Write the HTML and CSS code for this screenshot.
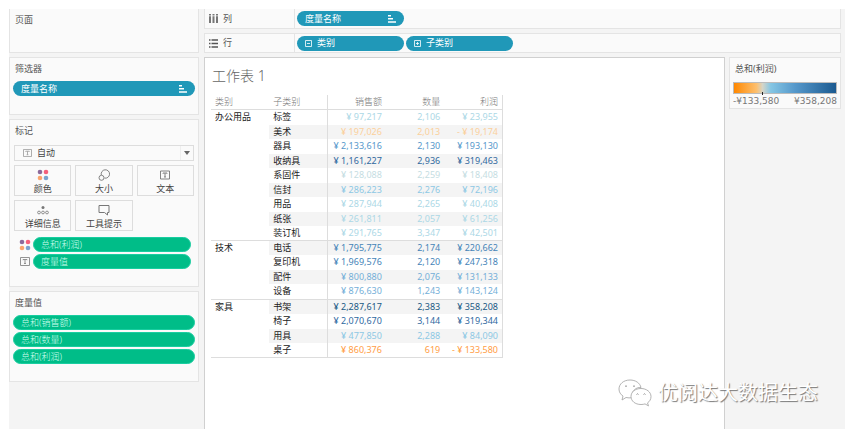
FILE: index.html
```html
<!DOCTYPE html>
<html lang="zh-CN">
<head>
    <meta charset="UTF-8">
    <title>工作表 1</title>
    <link rel="stylesheet" href="styles.css">
</head>
<body>
    <svg class="defs" width="0" height="0">
        <symbol id="sort" viewBox="0 0 8 8">
            <path d="M0 .7h3M0 3.700h5M0 7h8" stroke="currentColor" stroke-width="1.500"/>
        </symbol>
        <symbol id="dots" viewBox="0 0 12 12">
            <circle cx="3" cy="3" r="2.3" fill="#8c6a9b"/>
            <circle cx="9" cy="3" r="2.3" fill="#f5607c"/>
            <circle cx="3" cy="9" r="2.3" fill="#fba56d"/>
            <circle cx="9" cy="9" r="2.3" fill="#7ba3cf"/>
        </symbol>
        <symbol id="text" viewBox="0 0 10 9">
            <path d="M.5.5h9v8h-9z M3 3.200V2.500h4v.7 M5 2.500v4 M4 6.500h2" fill="none" stroke="currentColor" stroke-width=".9"/>
        </symbol>
    </svg>
    <div class="workbook">
        <aside class="sidebar">
            <section class="card pages">
                <h2>页面</h2>
            </section>
            <section class="card filters">
                <h2>筛选器</h2>
                <div class="pill blue"><span>度量名称</span><svg class="sort" width="8" height="8"><use href="#sort"/></svg></div>
            </section>
            <section class="card marks">
                <h2>标记</h2>
                <div class="mark-type">
                    <svg width="9" height="8"><use href="#text"/></svg>
                    <select aria-label="标记类型"><option>自动</option></select>
                    <span class="arrow"></span>
                </div>
                <div class="mark-buttons">
                    <button type="button"><svg width="12" height="12"><use href="#dots"/></svg>颜色</button>
                    <button type="button"><svg width="12" height="12" viewBox="0 0 12 12" fill="none" stroke="#777" stroke-width=".9"><path d="M3.300 6A4.200 4.200 0 1 1 6.500 9.100"/><circle cx="3.500" cy="8.800" r="2.500"/></svg>大小</button>
                    <button type="button"><svg width="10" height="12"><use href="#text"/></svg>文本</button>
                    <button type="button"><svg width="12" height="12" viewBox="0 0 12 12" fill="none" stroke="#777" stroke-width=".8"><circle cx="6" cy="3.500" r="1.500" fill="#777" stroke="none"/><circle cx="2" cy="8.500" r="1.400"/><circle cx="6" cy="8.500" r="1.400"/><circle cx="10" cy="8.500" r="1.400"/></svg>详细信息</button>
                    <button type="button"><svg width="12" height="12" viewBox="0 0 12 12" fill="none" stroke="#777"><path d="M1 1.500h10v7H9.500V11L6.500 8.500H1z"/></svg>工具提示</button>
                </div>
                <div class="mark-row"><svg width="12" height="12"><use href="#dots"/></svg><div class="pill green">总和(利润)</div></div>
                <div class="mark-row"><svg width="12" height="9"><use href="#text"/></svg><div class="pill green">度量值</div></div>
            </section>
            <section class="card values">
                <h2>度量值</h2>
                <div class="pill green">总和(销售额)</div>
                <div class="pill green">总和(数量)</div>
                <div class="pill green">总和(利润)</div>
            </section>
        </aside>
        <main class="main">
            <div class="shelf">
                <div class="shelf-name"><svg width="9" height="9" viewBox="0 0 9 9" stroke="#777" stroke-width="2"><path d="M1 0v1.500m3.500-1.500v1.500m3.500-1.500v1.500M1 2.200V9m3.500-6.800V9m3.500-6.800V9"/></svg>列</div>
                <div class="pill blue"><span>度量名称</span><svg class="sort" width="8" height="8"><use href="#sort"/></svg></div>
            </div>
            <div class="shelf">
                <div class="shelf-name"><svg width="9" height="9" viewBox="0 0 9 9" stroke="#555" stroke-width="1.400"><path d="M0 1h1.500M2.500 1H9M0 4.500h1.500M2.500 4.500H9M0 8h1.500M2.500 8H9"/></svg>行</div>
                <div class="pill blue"><svg width="7" height="7" viewBox="0 0 7 7" fill="none" stroke="#fff" stroke-width=".8"><path d="M.5.5h6v6h-6z M2 3.500h3"/></svg><span>类别</span></div>
                <div class="pill blue"><svg width="7" height="7" viewBox="0 0 7 7" fill="none" stroke="#fff" stroke-width=".8"><path d="M.5.5h6v6h-6z M2 3.500h3 M3.500 2v3"/></svg><span>子类别</span></div>
            </div>
            <div class="content">
                <section class="view">
                    <h1>工作表 1</h1>
                    <table class="crosstab">
                        <thead>
                            <tr><th>类别</th><th>子类别</th><th class="num first">销售额</th><th class="num">数量</th><th class="num">利润</th></tr>
                        </thead>
                        <tbody>
                            <tr class="c3"><th rowspan="9">办公用品</th><th>标签</th><td>¥ 97,217</td><td>2,106</td><td>¥ 23,955</td></tr>
                            <tr class="c1"><th>美术</th><td>¥ 197,026</td><td>2,013</td><td>- ¥ 19,174</td></tr>
                            <tr class="c6"><th>器具</th><td>¥ 2,133,616</td><td>2,130</td><td>¥ 193,130</td></tr>
                            <tr class="c8"><th>收纳具</th><td>¥ 1,161,227</td><td>2,936</td><td>¥ 319,463</td></tr>
                            <tr class="c2"><th>系固件</th><td>¥ 128,088</td><td>2,259</td><td>¥ 18,408</td></tr>
                            <tr class="c4"><th>信封</th><td>¥ 286,223</td><td>2,276</td><td>¥ 72,196</td></tr>
                            <tr class="c3"><th>用品</th><td>¥ 287,944</td><td>2,265</td><td>¥ 40,408</td></tr>
                            <tr class="c3"><th>纸张</th><td>¥ 261,811</td><td>2,057</td><td>¥ 61,256</td></tr>
                            <tr class="c3"><th>装订机</th><td>¥ 291,765</td><td>3,347</td><td>¥ 42,501</td></tr>
                            <tr class="c7 group"><th rowspan="4">技术</th><th>电话</th><td>¥ 1,795,775</td><td>2,174</td><td>¥ 220,662</td></tr>
                            <tr class="c7"><th>复印机</th><td>¥ 1,969,576</td><td>2,120</td><td>¥ 247,318</td></tr>
                            <tr class="c5"><th>配件</th><td>¥ 800,880</td><td>2,076</td><td>¥ 131,133</td></tr>
                            <tr class="c5"><th>设备</th><td>¥ 876,630</td><td>1,243</td><td>¥ 143,124</td></tr>
                            <tr class="c9 group"><th rowspan="4">家具</th><th>书架</th><td>¥ 2,287,617</td><td>2,383</td><td>¥ 358,208</td></tr>
                            <tr class="c8"><th>椅子</th><td>¥ 2,070,670</td><td>3,144</td><td>¥ 319,344</td></tr>
                            <tr class="c4"><th>用具</th><td>¥ 477,850</td><td>2,288</td><td>¥ 84,090</td></tr>
                            <tr class="c0"><th>桌子</th><td>¥ 860,376</td><td>619</td><td>- ¥ 133,580</td></tr>
                        </tbody>
                    </table>
                </section>
                <aside class="legend">
                    <h2>总和(利润)</h2>
                    <div class="ramp"><span class="tick"></span></div>
                    <div class="range"><span>-¥133,580</span><span>¥358,208</span></div>
                </aside>
            </div>
        </main>
        <div class="watermark">
            <svg width="34" height="28" viewBox="0 0 34 28" fill="#fff" stroke="#aaa" stroke-width=".9">
                <path d="M12 1C5.500 1 1 5 1 10c0 3 1.500 5.500 4 7l-1 4 4-2.500c2 .5 4 .5 6 .2C13 12 18 8 23 8.500 22 4 17.500 1 12 1z"/>
                <path d="M23 9.500c-6 0-10 3.500-10 8s4 8 10 8c1.500 0 3-.2 4-.6l3.500 2-1-3c2.300-1.500 3.500-3.700 3.500-6.400 0-4.500-4.500-8-10-8z"/>
                <path d="M7 7.500q1-1.500 2 0M15 7.500q1-1.500 2 0M18.500 15.500q1-1.500 2 0M25.500 15.500q1-1.500 2 0" fill="none" stroke="#888"/>
            </svg>
            <span>优阅达大数据生态</span>
        </div>
    </div>
</body>
</html>
```
FILE: styles.css
```css
* {
    box-sizing: border-box;
}
body {
    margin: 0;
    height: 100vh;
    padding: 9px 4px 7px 9px;
    background: #fff;
    color: #555;
    font-family: "Noto Sans", "Noto Sans CJK SC", sans-serif;
    font-size: 9px;
    line-height: 14px;
}
h1, h2 {
    margin: 0;
    font-weight: normal;
}
h2 {
    font-size: 9px;
    line-height: 14px;
}
svg {
    flex: none;
}
.defs {
    position: absolute;
}
.workbook {
    position: relative;
    display: flex;
    min-height: 100%;
    background: #f4f4f4;
}

/* left side */
.sidebar {
    display: flex;
    flex-direction: column;
    gap: 4px;
    width: 190px;
    flex: none;
}
.card {
    background: #fafafa;
    border: 1px solid #e4e4e4;
    padding: 4px 3px;
}
.card h2 {
    padding: 0 2px;
}
.pages {
    height: 44px;
    border-top: none;
}
.filters {
    height: 58px;
}
.filters .pill {
    margin-top: 5px;
}
.marks {
    height: 168px;
    padding: 4px;
}
.marks h2 {
    padding: 0 1px;
}
.values {
    height: 91px;
}
.values h2 {
    margin-bottom: 5px;
}
.pill {
    display: flex;
    align-items: center;
    height: 15px;
    padding: 0 8px;
    border-radius: 8px;
    color: #fff;
}
.blue {
    background: #2098b8;
}
.green {
    background: #00bd88;
    border: 1px solid #19cda0;
    padding: 0 7px;
    color: #d4fff1;
    font-weight: 300;
}
.sort {
    margin-left: auto;
}
.values .pill {
    margin-bottom: 2px;
}
.mark-type {
    display: flex;
    align-items: center;
    height: 16px;
    margin-top: 7px;
    padding-left: 8px;
    border: 1px solid #ddd;
    color: #999;
}
.mark-type select {
    flex: 1;
    align-self: stretch;
    appearance: none;
    border: none;
    border-right: 1px solid #eee;
    border-radius: 0;
    padding: 0 0 0 5px;
    background: none;
    color: #444;
    font: inherit;
}
.arrow {
    border: 3px solid transparent;
    border-top: 4px solid #666;
    border-bottom: none;
    margin: 0 3px;
}
.mark-buttons {
    display: grid;
    grid-template-columns: repeat(3, 1fr);
    gap: 4px;
    margin: 4px 0 6px;
}
.mark-buttons button {
    display: flex;
    flex-direction: column;
    align-items: center;
    height: 31px;
    padding: 3px 0 0;
    border: 1px solid #ddd;
    background: #fafafa;
    color: #444;
    font: inherit;
    line-height: 16px;
}
.mark-buttons svg {
    color: #777;
}
.mark-row {
    display: flex;
    align-items: center;
    gap: 2px;
    padding: 0 3px 0 5px;
    margin-bottom: 2px;
    color: #888;
}
.mark-row .pill {
    flex: 1;
}

/* shelves */
.main {
    flex: 1;
    display: flex;
    flex-direction: column;
    gap: 4px;
    padding: 0 4px 0 5px;
}
.shelf {
    display: flex;
    align-items: center;
    gap: 2px;
    height: 20px;
    border: 1px solid #e4e4e4;
    background: #fafafa;
}
.shelf:first-child {
    border-top: none;
}
.shelf-name {
    display: flex;
    align-items: center;
    align-self: stretch;
    gap: 5px;
    width: 90px;
    padding-left: 4px;
    border-right: 1px solid #e4e4e4;
}
.shelf .pill {
    width: 107px;
}
.shelf .pill svg + span {
    margin-left: 5px;
}

/* worksheet */
.content {
    flex: 1;
    display: flex;
    align-items: flex-start;
    gap: 4px;
}
.view {
    flex: 1;
    align-self: stretch;
    padding: 8px 6px;
    border: 1px solid #d0d0d0;
    border-bottom: none;
    background: #fff;
}
.view h1 {
    padding-left: 1px;
    color: #666;
    font-size: 14px;
    line-height: 20px;
    font-weight: 300;
}
.crosstab {
    width: 292px;
    margin-top: 9px;
    table-layout: fixed;
    border-collapse: collapse;
    border-right: 1px solid #ddd;
    border-bottom: 1px solid #ddd;
}
.crosstab th, .crosstab td {
    height: 14px;
    padding: 0 4px;
    font-weight: normal;
    line-height: 14px;
    white-space: nowrap;
    vertical-align: top;
}
.crosstab th {
    text-align: left;
    color: #222;
}
.crosstab tbody tr:nth-child(odd) {
    height: 15px;
}
.crosstab thead th {
    color: #777;
    font-weight: 300;
    border-bottom: 1px solid #ddd;
}
.crosstab td, .crosstab .num {
    text-align: right;
}
.crosstab .first, .crosstab th + td {
    border-left: 1px solid #ddd;
}
.crosstab tbody tr:nth-child(even) > :not([rowspan]) {
    background: #f4f4f4;
}
.group > * {
    border-top: 1px solid #ddd;
}
.c0 td { color: #ff9d45; }
.c1 td { color: #fbd09c; }
.c2 td { color: #c5dde2; }
.c3 td { color: #acd8e6; }
.c4 td { color: #8dc8e4; }
.c5 td { color: #75afd8; }
.c6 td { color: #5698cb; }
.c7 td { color: #4584b8; }
.c8 td { color: #30699f; }
.c9 td { color: #205984; }

/* colour legend */
.legend {
    width: 112px;
    padding: 4px 3px 0;
    border: 1px solid #e4e4e4;
    background: #fafafa;
}
.legend h2 {
    padding-left: 2px;
}
.ramp {
    height: 12px;
    margin-top: 6px;
    border: 1px solid #bbb;
    background: linear-gradient(90deg, #ff8800, #fdbf6e 22%, #d5d5c8 28%, #85c6e4 36%, #5598cb 60%, #1b5a90);
}
.tick {
    display: block;
    width: 1px;
    height: 3px;
    margin: 9px 0 0 27%;
    background: #222;
}
.range {
    display: flex;
    justify-content: space-between;
    color: #777;
    font-family: "DejaVu Sans", sans-serif;
}

.watermark {
    position: absolute;
    right: 27px;
    bottom: 22px;
    display: flex;
    align-items: center;
    gap: 6px;
    color: #fff;
    font-size: 20px;
    line-height: 28px;
    text-shadow: 1px 1px 1px #777;
}
```
